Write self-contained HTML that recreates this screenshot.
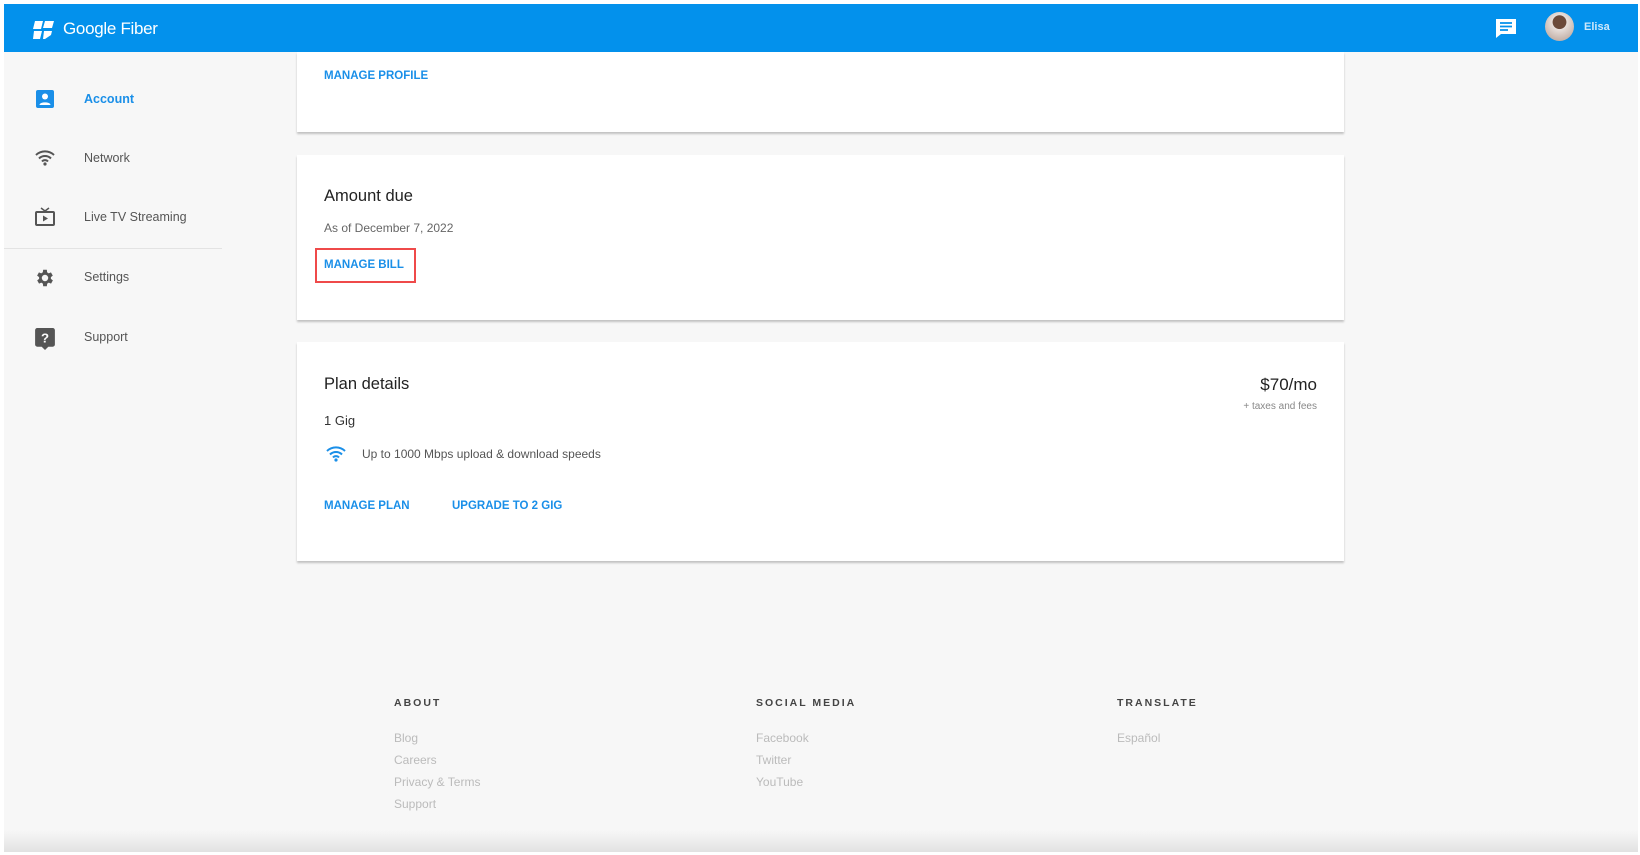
<!DOCTYPE html>
<html><head><meta charset="utf-8"><style>
*{box-sizing:border-box;margin:0;padding:0}
body{width:1640px;height:855px;background:#fff;font-family:"Liberation Sans",sans-serif;position:relative;overflow:hidden}
.page{position:absolute;left:4px;top:4px;width:1634px;height:848px;background:#f7f7f7;overflow:hidden}
.hdr{position:absolute;left:0;top:0;width:100%;height:48px;background:#0391ec;z-index:5}
.a{position:absolute;white-space:nowrap}
.card{position:absolute;left:293px;width:1047px;background:#fff;box-shadow:0 2px 2px rgba(0,0,0,.22)}
.blue{color:#1a8fe8;font-weight:bold;font-size:11.5px}
.nav{font-size:12.5px;color:#555}
.fh{font-size:10.5px;font-weight:bold;letter-spacing:2px;color:#444}
.fl{font-size:12px;color:#bbb}
</style></head><body>
<div class="page">
<div class="hdr">
 <svg class="a" style="left:29px;top:16px" width="22" height="20" viewBox="0 0 22 20"><path d="M2 1h8l-2 8H0z M12 1h9l-2 7h-9z M1 11h8l-2 8H0z M11 11h8l-1 4-6 4h-2z" fill="#fff"/></svg>
 <div class="a" style="left:59px;top:15px;font-size:17px;color:#fff;letter-spacing:-0.3px">Google Fiber</div>
 <svg class="a" style="left:1490px;top:13px" width="24" height="24" viewBox="0 0 24 24"><path d="M2 2h20v15H7l-5 4z" fill="#fff"/><path d="M6 6h12M6 9.5h12M6 13h8" stroke="#0391ec" stroke-width="1.8"/></svg>
 <div class="a" style="left:1541px;top:8px;width:29px;height:29px;border-radius:50%;background:radial-gradient(circle at 50% 35%,#6b4a3a 0 28%,#e8e0dc 30%,#c9b8b0 70%,#a9a0a0 100%)"></div>
 <div class="a" style="left:1580px;top:17px;font-size:11px;color:#cde7fb;font-weight:bold">Elisa</div>
</div>
<svg class="a" style="left:32px;top:86px" width="18" height="18" viewBox="0 0 18 18"><rect width="18" height="18" rx="2" fill="#1a8fe8"/><circle cx="9" cy="6.5" r="3" fill="#fff"/><path d="M3.5 15c0-3.5 11-3.5 11 0z" fill="#fff"/></svg>
<div class="a blue" style="left:80px;top:88px;font-size:12.5px">Account</div>
<svg class="a" style="left:31px;top:146px" width="20" height="16" viewBox="0 0 20 16"><path d="M1 5a13 13 0 0 1 18 0M4 8.5a8.5 8.5 0 0 1 12 0M7 11.5a4 4 0 0 1 6 0" stroke="#555" stroke-width="2" fill="none"/><circle cx="10" cy="14" r="1.6" fill="#555"/></svg>
<div class="a nav" style="left:80px;top:147px">Network</div>
<svg class="a" style="left:31px;top:203px" width="20" height="19" viewBox="0 0 20 19"><path d="M6 1l4 3 4-3" stroke="#555" stroke-width="1.5" fill="none"/><rect x="1" y="5" width="18" height="13" rx="1" stroke="#555" stroke-width="2" fill="none"/><path d="M8 8.5v6l5-3z" fill="#555"/></svg>
<div class="a nav" style="left:80px;top:206px">Live TV Streaming</div>
<div class="a" style="left:0;top:244px;width:218px;height:1px;background:#e3e3e3"></div>
<svg class="a" style="left:30px;top:263px" width="22" height="22" viewBox="0 0 24 24"><path fill="#555" d="M19.4 13a7.5 7.5 0 0 0 0-2l2.1-1.6-2-3.5-2.5 1a7 7 0 0 0-1.7-1L15 3h-4l-.4 2.9a7 7 0 0 0-1.7 1l-2.5-1-2 3.5L6.6 11a7.5 7.5 0 0 0 0 2l-2.1 1.6 2 3.5 2.5-1a7 7 0 0 0 1.7 1L11 21h4l.4-2.9a7 7 0 0 0 1.7-1l2.5 1 2-3.5zM13 15.5a3.5 3.5 0 1 1 0-7 3.5 3.5 0 0 1 0 7z" transform="translate(-1 0)"/></svg>
<div class="a nav" style="left:80px;top:266px">Settings</div>
<svg class="a" style="left:31px;top:324px" width="20" height="22" viewBox="0 0 18 20"><path d="M2 0h14a2 2 0 0 1 2 2v13a2 2 0 0 1-2 2h-4l-3 3-3-3H2a2 2 0 0 1-2-2V2a2 2 0 0 1 2-2z" fill="#555"/><text x="9" y="13" font-size="12" font-weight="bold" fill="#fff" text-anchor="middle" font-family="Liberation Sans">?</text></svg>
<div class="a nav" style="left:80px;top:326px">Support</div>
<div class="card" style="top:48px;height:80px">
 <div class="a blue" style="left:27px;top:18px">MANAGE PROFILE</div>
</div>
<div class="card" style="top:151px;height:165px">
 <div class="a" style="left:27px;top:32px;font-size:16.5px;color:#222">Amount due</div>
 <div class="a" style="left:27px;top:66px;font-size:12px;color:#666">As of December 7, 2022</div>
 <div class="a" style="left:18px;top:93px;width:101px;height:35px;border:2px solid #ef4a4a"></div>
 <div class="a blue" style="left:27px;top:104px">MANAGE BILL</div>
</div>
<div class="card" style="top:338px;height:219px">
 <div class="a" style="left:27px;top:33px;font-size:16.5px;color:#222">Plan details</div>
 <div class="a" style="right:27px;top:33px;font-size:17px;color:#222">$70/mo</div>
 <div class="a" style="right:27px;top:59px;font-size:10px;color:#888">+ taxes and fees</div>
 <div class="a" style="left:27px;top:71px;font-size:13px;color:#333">1 Gig</div>
 <svg class="a" style="left:29px;top:104px" width="20" height="16" viewBox="0 0 20 16"><path d="M1 5a13 13 0 0 1 18 0M4 8.5a8.5 8.5 0 0 1 12 0M7 11.5a4 4 0 0 1 6 0" stroke="#1a8fe8" stroke-width="2" fill="none"/><circle cx="10" cy="14" r="1.6" fill="#1a8fe8"/></svg>
 <div class="a" style="left:65px;top:105px;font-size:12px;color:#555">Up to 1000 Mbps upload &amp; download speeds</div>
 <div class="a blue" style="left:27px;top:158px">MANAGE PLAN</div>
 <div class="a blue" style="left:155px;top:158px">UPGRADE TO 2 GIG</div>
</div>
<div class="a fh" style="left:390px;top:693px">ABOUT</div>
<div class="a fl" style="left:390px;top:727px">Blog</div>
<div class="a fl" style="left:390px;top:749px">Careers</div>
<div class="a fl" style="left:390px;top:771px">Privacy &amp; Terms</div>
<div class="a fl" style="left:390px;top:793px">Support</div>
<div class="a fh" style="left:752px;top:693px">SOCIAL MEDIA</div>
<div class="a fl" style="left:752px;top:727px">Facebook</div>
<div class="a fl" style="left:752px;top:749px">Twitter</div>
<div class="a fl" style="left:752px;top:771px">YouTube</div>
<div class="a fh" style="left:1113px;top:693px">TRANSLATE</div>
<div class="a fl" style="left:1113px;top:727px">Español</div>
<div class="a" style="left:0;top:826px;width:100%;height:22px;background:linear-gradient(#f7f7f7,#e2e2e2)"></div>
</div>
</body></html>
